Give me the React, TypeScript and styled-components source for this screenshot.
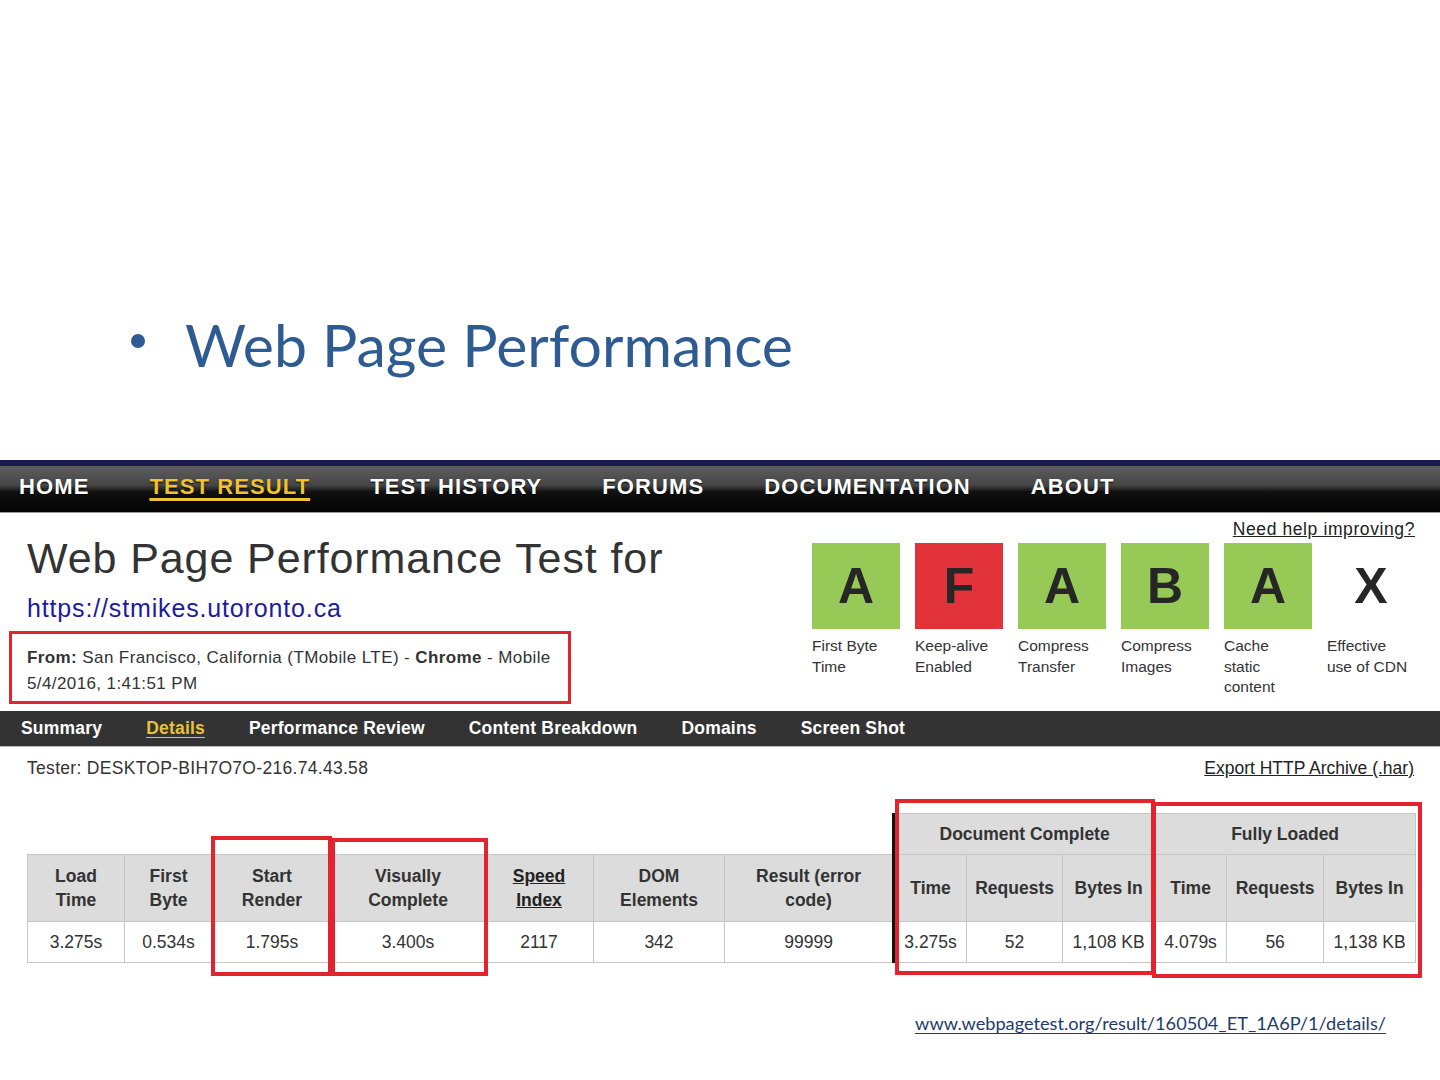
import React from 'react'
import styled, { createGlobalStyle } from 'styled-components'

const GlobalStyle = createGlobalStyle`
  html, body {
    margin: 0;
    padding: 0;
    background: #ffffff;
  }
`

const Slide = styled.div`
  width: 1440px;
  height: 1080px;
  overflow: hidden;
  background: #ffffff;
  display: flex;
  flex-direction: column;
`

const BulletArea = styled.div`
  height: 460px;
  box-sizing: border-box;
  padding: 310px 0 0 131px;
`

const BulletRow = styled.div`
  display: flex;
  align-items: center;
  gap: 40px;
  font-family: Lato, 'Open Sans', sans-serif;
  font-size: 59px;
  line-height: 70px;
  color: #2e5b92;
`

const BulletDot = styled.span`
  width: 14px;
  height: 14px;
  border-radius: 50%;
  background: #2e5b92;
  margin-top: -8px;
`

const Screenshot = styled.div`
  position: relative;
  height: 520px;
  font-family: 'Liberation Sans', Arial, sans-serif;
  color: #333333;
`

const TopStrip = styled.div`
  height: 6px;
  background: #1c1a4c;
`

const NavBar = styled.div`
  height: 46px;
  display: flex;
  align-items: center;
  gap: 60px;
  padding-left: 19px;
  background: linear-gradient(#5e5e5e 0%, #454545 42%, #101010 56%, #030303 100%);
  border-bottom: 1px solid #9a9a9a;
`

const NavItem = styled.span<{ $active?: boolean }>`
  font-size: 22px;
  font-weight: bold;
  letter-spacing: 1.1px;
  color: ${p => (p.$active ? '#f0c22e' : '#ffffff')};
  text-shadow: 0 1px 1px #000;
  text-decoration: ${p => (p.$active ? 'underline' : 'none')};
  text-decoration-thickness: 3px;
  text-underline-offset: 4px;
  margin-top: -5px;
`

const Header = styled.div`
  height: 198px;
  display: flex;
  justify-content: space-between;
  padding: 0 25px 0 27px;
`

const HeaderLeft = styled.div`
  display: flex;
  flex-direction: column;
`

const Title = styled.h1`
  margin: 21px 0 0 0;
  font-size: 43px;
  line-height: 48px;
  font-weight: normal;
  letter-spacing: 0.9px;
  color: #333333;
`

const SiteUrl = styled.div`
  margin-top: 11px;
  font-size: 25px;
  line-height: 30px;
  letter-spacing: 0.85px;
  color: #1d1a9c;
`

const FromBox = styled.div`
  margin: 8px 0 0 -18px;
  width: 562px;
  height: 73px;
  box-sizing: border-box;
  border: 3px solid #e3232d;
  padding: 11px 0 0 15px;
  font-size: 17px;
  line-height: 26px;
  letter-spacing: 0.4px;
  color: #333333;
`

const HeaderRight = styled.div`
  display: flex;
  flex-direction: column;
  align-items: flex-end;
`

const HelpLink = styled.a`
  margin-top: 6px;
  font-size: 17.5px;
  line-height: 20px;
  letter-spacing: 0.6px;
  color: #222222;
  text-decoration: underline;
`

const Grades = styled.div`
  display: flex;
  gap: 15px;
  margin-top: 4px;
`

const Grade = styled.div`
  width: 88px;
  display: flex;
  flex-direction: column;
`

const GradeTile = styled.div<{ $bg: string }>`
  height: 86px;
  background: ${p => p.$bg};
  display: flex;
  align-items: center;
  justify-content: center;
  font-size: 50px;
  font-weight: bold;
  color: #262626;
`

const GradeLabel = styled.div`
  margin-top: 7px;
  font-size: 15.5px;
  line-height: 20.5px;
  color: #333333;
`

const SubNav = styled.div`
  height: 35px;
  display: flex;
  align-items: center;
  gap: 44px;
  padding-left: 21px;
  background: #333333;
  border-bottom: 1px solid #b8b8b8;
`

const SubNavItem = styled.span<{ $active?: boolean }>`
  font-size: 17.5px;
  font-weight: bold;
  letter-spacing: 0.2px;
  color: ${p => (p.$active ? '#e8c23a' : '#ffffff')};
  text-decoration: ${p => (p.$active ? 'underline' : 'none')};
  text-underline-offset: 3px;
`

const InfoRow = styled.div`
  display: flex;
  justify-content: space-between;
  padding: 11px 26px 0 27px;
  font-size: 17.5px;
  line-height: 20px;
`

const TesterText = styled.span`
  letter-spacing: 0.3px;
`

const ExportLink = styled.a`
  color: #222222;
  text-decoration: underline;
`

const ResultTable = styled.table`
  margin: 35px 0 0 27px;
  border-collapse: collapse;
  table-layout: fixed;
  width: 1388px;
  font-size: 17.5px;
  color: #333333;
`

const Col = styled.col<{ $w: number }>`
  width: ${p => p.$w}px;
`

const Th = styled.th<{ $split?: boolean; $blank?: boolean }>`
  background: ${p => (p.$blank ? 'transparent' : '#dcdcdc')};
  border: ${p => (p.$blank ? 'none' : '1px solid #c6c6c6')};
  border-left: ${p => (p.$split ? '3px solid #111' : undefined)};
  font-weight: bold;
  line-height: 24px;
  padding: 0;
  text-align: center;
  white-space: nowrap;
`

const GroupTh = styled(Th)`
  height: 40px;
`

const SubTh = styled(Th)`
  height: 66px;
`

const Td = styled.td<{ $split?: boolean }>`
  height: 40px;
  padding: 0;
  text-align: center;
  white-space: nowrap;
  border: 1px solid #c6c6c6;
  border-left: ${p => (p.$split ? '3px solid #111' : undefined)};
  background: #ffffff;
`

const HeadLink = styled.span`
  text-decoration: underline;
  color: #222;
`

const Annotation = styled.div<{ $x: number; $y: number; $w: number; $h: number }>`
  position: absolute;
  left: ${p => p.$x}px;
  top: ${p => p.$y}px;
  width: ${p => p.$w}px;
  height: ${p => p.$h}px;
  box-sizing: border-box;
  border: 4px solid #e3232d;
  pointer-events: none;
`

const Footer = styled.div`
  display: flex;
  justify-content: flex-end;
  padding: 32px 54px 0 0;
`

const SourceLink = styled.a`
  font-family: Lato, 'Open Sans', sans-serif;
  font-size: 18.2px;
  color: #1f3b6a;
  text-decoration: underline;
  text-underline-offset: 3px;
`

const grades = [
  { letter: 'A', bg: '#96c956', label: ['First Byte', 'Time'] },
  { letter: 'F', bg: '#e3333a', label: ['Keep-alive', 'Enabled'] },
  { letter: 'A', bg: '#96c956', label: ['Compress', 'Transfer'] },
  { letter: 'B', bg: '#96c956', label: ['Compress', 'Images'] },
  { letter: 'A', bg: '#96c956', label: ['Cache', 'static', 'content'] },
  { letter: 'X', bg: 'transparent', label: ['Effective', 'use of CDN'] },
]

const colWidths = [97, 88, 119, 153, 109, 131, 169, 73, 96, 92, 72, 97, 92]

const App: React.FC = () => {
  return (
    <Slide>
      <GlobalStyle />
      <BulletArea>
        <BulletRow>
          <BulletDot />
          <span>Web Page Performance</span>
        </BulletRow>
      </BulletArea>

      <Screenshot>
        <TopStrip />
        <NavBar>
          <NavItem>HOME</NavItem>
          <NavItem $active>TEST RESULT</NavItem>
          <NavItem>TEST HISTORY</NavItem>
          <NavItem>FORUMS</NavItem>
          <NavItem>DOCUMENTATION</NavItem>
          <NavItem>ABOUT</NavItem>
        </NavBar>

        <Header>
          <HeaderLeft>
            <Title>Web Page Performance Test for</Title>
            <SiteUrl>https://stmikes.utoronto.ca</SiteUrl>
            <FromBox>
              <div>
                <b>From:</b> San Francisco, California (TMobile LTE) - <b>Chrome</b> - Mobile
              </div>
              <div>5/4/2016, 1:41:51 PM</div>
            </FromBox>
          </HeaderLeft>
          <HeaderRight>
            <HelpLink>Need help improving?</HelpLink>
            <Grades>
              {grades.map((g, i) => (
                <Grade key={i}>
                  <GradeTile $bg={g.bg}>{g.letter}</GradeTile>
                  <GradeLabel>
                    {g.label.map(l => (
                      <div key={l}>{l}</div>
                    ))}
                  </GradeLabel>
                </Grade>
              ))}
            </Grades>
          </HeaderRight>
        </Header>

        <SubNav>
          <SubNavItem>Summary</SubNavItem>
          <SubNavItem $active>Details</SubNavItem>
          <SubNavItem>Performance Review</SubNavItem>
          <SubNavItem>Content Breakdown</SubNavItem>
          <SubNavItem>Domains</SubNavItem>
          <SubNavItem>Screen Shot</SubNavItem>
        </SubNav>

        <InfoRow>
          <TesterText>Tester: DESKTOP-BIH7O7O-216.74.43.58</TesterText>
          <ExportLink>Export HTTP Archive (.har)</ExportLink>
        </InfoRow>

        <ResultTable>
          <colgroup>
            {colWidths.map((w, i) => (
              <Col key={i} $w={w} />
            ))}
          </colgroup>
          <thead>
            <tr>
              <GroupTh $blank colSpan={7} />
              <GroupTh colSpan={3} $split>Document Complete</GroupTh>
              <GroupTh colSpan={3}>Fully Loaded</GroupTh>
            </tr>
            <tr>
              <SubTh>Load<br />Time</SubTh>
              <SubTh>First<br />Byte</SubTh>
              <SubTh>Start<br />Render</SubTh>
              <SubTh>Visually<br />Complete</SubTh>
              <SubTh><HeadLink>Speed</HeadLink><br /><HeadLink>Index</HeadLink></SubTh>
              <SubTh>DOM<br />Elements</SubTh>
              <SubTh>Result (error<br />code)</SubTh>
              <SubTh $split>Time</SubTh>
              <SubTh>Requests</SubTh>
              <SubTh>Bytes In</SubTh>
              <SubTh>Time</SubTh>
              <SubTh>Requests</SubTh>
              <SubTh>Bytes In</SubTh>
            </tr>
          </thead>
          <tbody>
            <tr>
              <Td>3.275s</Td>
              <Td>0.534s</Td>
              <Td>1.795s</Td>
              <Td>3.400s</Td>
              <Td>2117</Td>
              <Td>342</Td>
              <Td>99999</Td>
              <Td $split>3.275s</Td>
              <Td>52</Td>
              <Td>1,108 KB</Td>
              <Td>4.079s</Td>
              <Td>56</Td>
              <Td>1,138 KB</Td>
            </tr>
          </tbody>
        </ResultTable>

        <Annotation $x={211} $y={376} $w={121} $h={140} />
        <Annotation $x={331} $y={378} $w={157} $h={138} />
        <Annotation $x={895} $y={339} $w={260} $h={176} />
        <Annotation $x={1152} $y={342} $w={270} $h={176} />
      </Screenshot>

      <Footer>
        <SourceLink>www.webpagetest.org/result/160504_ET_1A6P/1/details/</SourceLink>
      </Footer>
    </Slide>
  )
}

export default App
